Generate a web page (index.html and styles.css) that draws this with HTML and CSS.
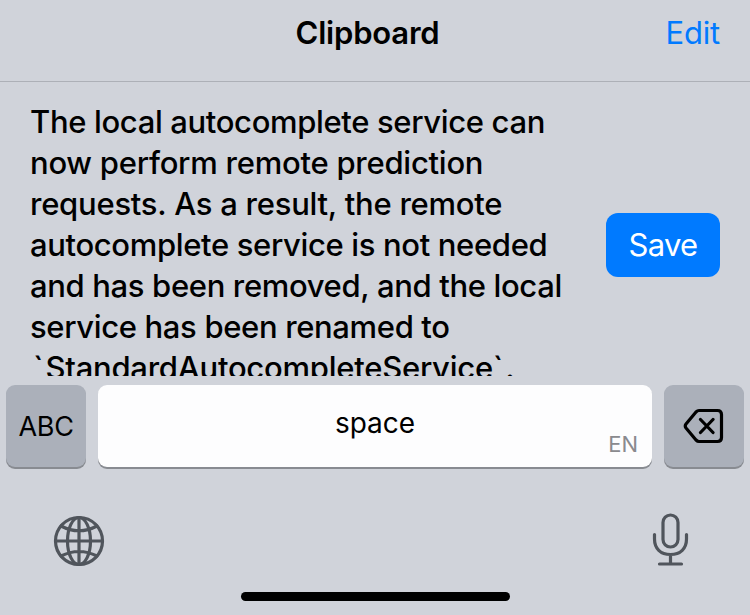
FILE: index.html
```html
<!DOCTYPE html>
<html lang="en">
<head>
<meta charset="utf-8">
<title>Clipboard</title>
<link rel="stylesheet" href="styles.css">
</head>
<body>
<main class="keyboard">
  <header class="bar"><h1 class="title">Clipboard</h1><button class="edit">Edit</button></header>
  <section class="clip">
    <p class="text"><span>The local autocomplete service can</span><span class="loose">now perform remote prediction</span><span class="loose">requests. As a result, the remote</span><span>autocomplete service is not needed</span><span>and has been removed, and the local</span><span>service has been renamed to</span><span class="code"><span class="tick">`</span>StandardAutocompleteService<span class="tick">`</span>.</span></p>
    <button class="save">Save</button>
  </section>
  <div class="keys">
    <button class="key side abc">ABC</button>
    <button class="key space"><span class="label">space</span><span class="lang">EN</span></button>
    <button class="key side" aria-label="Delete"><svg width="42" height="36" viewBox="0 0 42 36"><path d="M16 2.500H34.500Q38.500 2.500 38.500 6.500V29.500Q38.500 33.500 34.500 33.500H16Q14.500 33.500 13 32L3 20Q1.500 18 3 16L13 4Q14.500 2.500 16 2.500ZM17.500 11.500L30 24.500M30 11.500L17.500 24.500"/></svg></button>
  </div>
  <footer class="dock">
    <svg class="icon globe" width="52" height="52" viewBox="0 0 52 52"><circle cx="26" cy="26" r="23.500"/><ellipse cx="26" cy="26" rx="11.500" ry="23.500"/><path d="M26 2.500V49.500M2.500 26H49.500M8 11Q26 20.500 44 11M8 41Q26 32 44 41"/></svg>
    <svg class="icon" width="38" height="54" viewBox="0 0 38 54"><rect x="12" y="2" width="15" height="32" rx="7.500"/><path d="M3.500 21.500V26C3.500 35.500 9.500 41.500 19.500 41.500S35.500 35.500 35.500 26V21.500M19.500 41.500V51M8.500 51H30.500"/></svg>
  </footer>
  <div class="home"></div>
</main>
</body>
</html>
```
FILE: styles.css
```css
* { box-sizing: border-box; }
body { margin: 0; background: #d0d3da; font-family: Inter, sans-serif; }
button { border: 0; padding: 0; font-family: inherit; }
.keyboard { width: 750px; height: 615px; overflow: hidden; display: flex; flex-direction: column; color: #000; }
.bar { height: 82px; border-bottom: 1px solid #adb0b7; display: grid; grid-template-columns: 1fr auto 1fr; padding: 13px 30px 0 15px; align-items: start; }
.title { grid-column: 2; margin: 0; font-size: 31px; line-height: 40px; font-weight: 600; letter-spacing: -.2px; }
.edit { justify-self: end; background: none; color: #007aff; font-size: 31px; line-height: 40px; letter-spacing: -.2px; }
.clip { height: 294px; overflow: hidden; display: flex; justify-content: space-between; padding: 19px 30px 0; }
.text { margin: 0; font-size: 31px; line-height: 41px; font-weight: 500; letter-spacing: -.35px; }
.text > span { display: block; white-space: nowrap; }
.text .loose { letter-spacing: -.25px; }
.text .code { letter-spacing: -.25px; padding-left: 3px; }
.tick { letter-spacing: 2px; }
.save { width: 114px; height: 64px; margin-top: 112px; border-radius: 12px; background: #007aff; color: #fff; font-size: 31px; letter-spacing: -.7px; padding-bottom: 1px; }
.keys { display: flex; gap: 12px; padding: 9px 6px 0; height: 93px; }
.key { height: 82px; border-radius: 9px; box-shadow: 0 2px 0 #888b91; color: #000; }
.side { width: 80px; background: #abb0ba; display: flex; align-items: center; justify-content: center; }
.side svg { fill: none; stroke: #000; stroke-width: 3.2; stroke-linejoin: round; stroke-linecap: round; }
.abc { font-size: 27px; letter-spacing: -.3px; }
.space { flex: 1; background: #fdfdfe; display: grid; grid-template-columns: 1fr auto 1fr; padding: 0 14px; align-items: center; }
.label { grid-column: 2; font-size: 28px; padding-bottom: 7px; }
.lang { justify-self: end; align-self: end; color: #8a8a8e; font-size: 22px; padding-bottom: 10px; }
.dock { display: flex; justify-content: space-between; padding: 44px 61px 0 53px; height: 123px; }
.icon { fill: none; stroke: #50555c; stroke-width: 3.2; stroke-linecap: round; }
.globe { margin-top: 2px; }
.home { width: 269px; height: 9px; border-radius: 5px; background: #000; margin: 0 auto; }
```
